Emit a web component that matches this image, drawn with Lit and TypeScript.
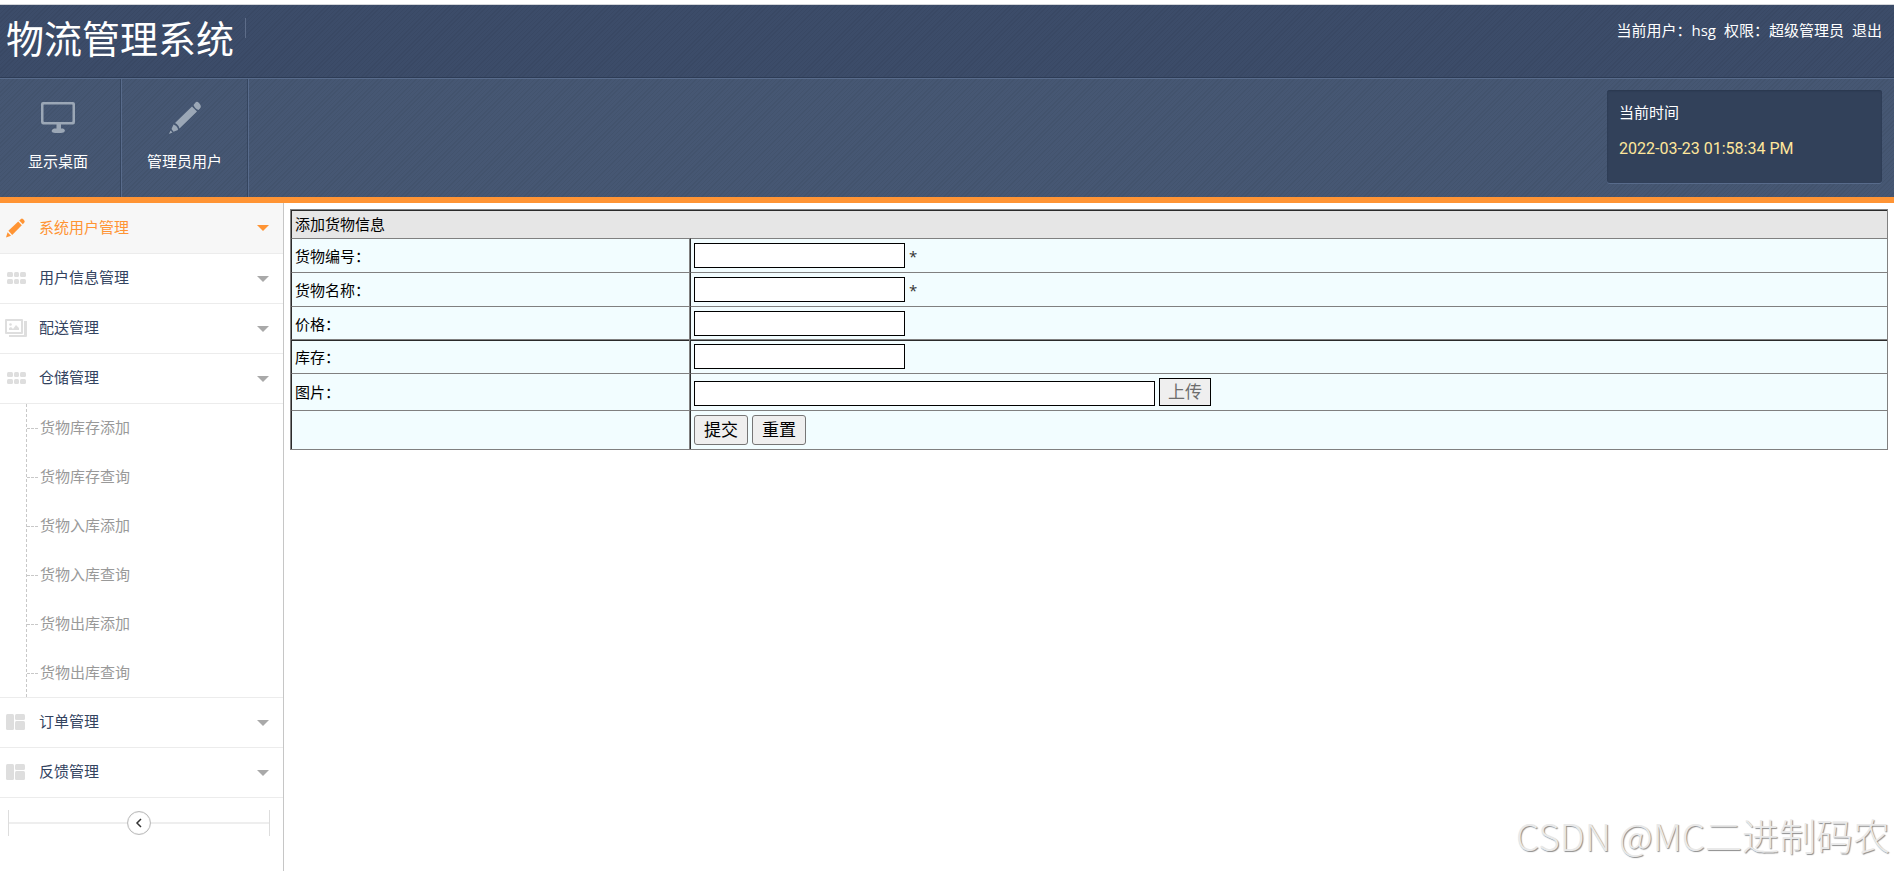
import { LitElement, html, css, svg, nothing } from "lit";
import { customElement } from "lit/decorators.js";
import { classMap } from "lit/directives/class-map.js";

const pencil = svg`
  <path d="M1 19.5 2.6 14.2 6 17.8Z"/>
  <path d="M3.4 12.8 13.2 3.6 16.8 7.2 7.2 17Z"/>
  <path d="M14.2 2.6 16 .9Q17 .2 18 1.1L19.3 2.4Q20.2 3.4 19.3 4.5L17.8 6.2Z"/>`;

const icons: Record<string, unknown> = {
  pencil,
  grid: svg`
    <rect x="2" y="3" width="6" height="5" rx="1.5"/><rect x="9" y="3" width="5" height="5" rx="1.5"/><rect x="15" y="3" width="6" height="5" rx="1.5"/>
    <rect x="2" y="10" width="6" height="5" rx="1.5"/><rect x="9" y="10" width="5" height="5" rx="1.5"/><rect x="15" y="10" width="6" height="5" rx="1.5"/>`,
  gallery: svg`
    <path fill-rule="evenodd" d="M1 0H17Q18 0 18 1V14Q18 15 17 15H1Q0 15 0 14V1Q0 0 1 0ZM2 2V13H16V2Z"/>
    <path d="M4 11V9L6 8 8 10 11 6 14 9V11Z"/><circle cx="5.5" cy="5.5" r="1.3"/>
    <path d="M19 2H22V17Q22 18 21 18H4V16H19Z"/>`,
  layout: svg`
    <rect x="1" y="1" width="8" height="16" rx="1.5"/><rect x="10" y="1" width="10" height="6" rx="1.5"/><rect x="10" y="8" width="10" height="9" rx="1.5"/>`,
};

interface Section {
  label: string;
  icon: string;
  active?: boolean;
  children?: string[];
}

const sections: Section[] = [
  { label: "系统用户管理", icon: "pencil", active: true },
  { label: "用户信息管理", icon: "grid" },
  { label: "配送管理", icon: "gallery" },
  {
    label: "仓储管理",
    icon: "grid",
    children: ["货物库存添加", "货物库存查询", "货物入库添加", "货物入库查询", "货物出库添加", "货物出库查询"],
  },
  { label: "订单管理", icon: "layout" },
  { label: "反馈管理", icon: "layout" },
];

@customElement("page-header")
class PageHeader extends LitElement {
  static styles = css`
    :host { display: block; border-top: 4px solid #fff; border-bottom: 6px solid #ff9434; color: #fff; }
    .brand, .tools {
      background-image: repeating-linear-gradient(135deg, rgb(0 0 0 / 5%) 0 1px, transparent 1px 3px);
    }
    .brand { display: flex; justify-content: space-between; align-items: flex-start; height: 72px; padding: 0 12px 0 6px;
      background-color: #3c4c69; border-top: 1px solid #d4d6da; border-bottom: 1px solid #2d3c56; }
    .title { display: flex; gap: 11px; margin: 0; font-size: 38px; font-weight: 400; line-height: 67px; }
    .title::after { content: ""; width: 1px; height: 20px; margin-top: 13px; background: #5d6c88; }
    .user { display: flex; gap: 8px; font-size: 15px; line-height: 20px; padding-top: 15px; }
    a { color: inherit; text-decoration: none; }
    .tools { display: flex; justify-content: space-between; background-color: #465773; border-top: 1px solid #586b8b; }
    .shortcuts { display: flex; }
    .shortcut { display: flex; flex-direction: column; align-items: center; gap: 14px; height: 118px; box-sizing: border-box;
      padding: 21px 26px 0 25px; font-size: 15px; line-height: 22px; border-right: 1px solid #586b8b; box-shadow: inset -1px 0 #35455f; }
    .shortcut:first-child { padding-left: 28px; padding-right: 33px; }
    .shortcut svg { width: 36px; height: 36px; fill: #9ba7b6; }
    .clock { width: 275px; box-sizing: border-box; height: 93px; margin: 11px 12px 0 0; padding: 11px 12px; border-radius: 3px;
      background: #32415a; box-shadow: inset 0 1px 2px #29374e, 0 1px #586b8b; font-size: 15px; line-height: 22px; }
    .time { display: block; margin-top: 15px; font-family: Roboto, sans-serif; font-size: 16px; color: #ffe79c; }
  `;

  render() {
    return html`
      <div class="brand">
        <h1 class="title">物流管理系统</h1>
        <div class="user"><span>当前用户：hsg</span><span>权限：超级管理员</span><a href="#logout">退出</a></div>
      </div>
      <div class="tools">
        <nav class="shortcuts">
          <a class="shortcut" href="#desktop">
            <svg viewBox="0 0 36 36" aria-hidden="true">
              <path fill-rule="evenodd" d="M3 2H33Q35 2 35 4V22Q35 24.500 33 24.500H21V28.500H23Q25 29 25 31Q24 33 21 33H15Q12 33 11.500 31Q12 29 14 28.500H16.500V24.500H3Q1 24 1 22V4Q1 2 3 2ZM4 4.500Q3.500 4.500 3.500 5V21Q3.500 22 4.500 22H31.500Q32.500 22 32.500 21V5Q32.500 4.500 32 4.500Z"/>
            </svg>
            <span>显示桌面</span>
          </a>
          <a class="shortcut" href="#admins">
            <svg viewBox="0 0 36 36" aria-hidden="true">
              <path d="M2 34 3.500 30.500 5.500 32.500ZM4.500 29 6.500 24.500Q11 26 11 30L6.500 31.800ZM8 23 25 6.500 30 11.500 12.500 28.500Q11.500 24.500 8 23ZM26.500 5 28.500 2.500Q30 1 32 3L33.500 5Q34.500 7 33 8.500L31.500 10Q28 9 26.500 5Z"/>
            </svg>
            <span>管理员用户</span>
          </a>
        </nav>
        <div class="clock">当前时间<time class="time" datetime="2022-03-23T13:58:34">2022-03-23 01:58:34 PM</time></div>
      </div>
    `;
  }
}

@customElement("side-menu")
class SideMenu extends LitElement {
  static styles = css`
    :host { display: block; box-sizing: border-box; width: 284px; border-right: 1px solid #c6c6c6; font-size: 15px; }
    ul { list-style: none; margin: 0; padding: 0; }
    a { text-decoration: none; }
    .row { display: flex; align-items: center; height: 50px; box-sizing: border-box; padding: 0 14px 0 5px;
      line-height: 22px; color: #33435f; border-bottom: 1px solid #ececec; }
    .row.active { height: 51px; background: #f7f7f7; color: #ff9434; }
    .icon { width: 22px; height: 20px; margin-right: 12px; fill: #dedede; }
    .arrow { width: 12px; height: 6px; margin-left: auto; fill: #a9a9a9; }
    .active .icon, .active .arrow { fill: #ff9434; }
    .text { padding-bottom: 3px; }
    .children { margin-left: 26px; border-left: 1px dashed #c8c8c8; }
    .child { display: flex; align-items: center; height: 49px; line-height: 22px; color: #999; }
    .child::before { content: ""; width: 11px; margin-right: 2px; border-top: 1px dashed #c8c8c8; }
    li:last-child > .child { height: 48px; }
    .sub { border-bottom: 1px solid #ececec; }
    .fold { display: flex; align-items: center; height: 26px; margin: 12px 13px 0 8px; border: solid #ddd; border-width: 0 1px; }
    .fold::before, .fold::after { content: ""; flex: 1; height: 2px; background: #eee; }
    .toggle { display: grid; place-items: center; width: 24px; height: 24px; padding: 0; border: 1px solid #bbb; border-radius: 50%;
      background: #fff; box-shadow: inset 0 0 1px #bbb; }
    .toggle svg { width: 8px; height: 10px; fill: none; stroke: #333; stroke-width: 1.5; }
  `;

  render() {
    return html`
      <nav>
        <ul>
          ${sections.map(
            (s) => html`
              <li>
                <a class=${classMap({ row: true, active: !!s.active })} href="#">
                  <svg class="icon" viewBox="0 0 22 20" aria-hidden="true">${icons[s.icon]}</svg>
                  <span class="text">${s.label}</span>
                  <svg class="arrow" viewBox="0 0 12 6" aria-hidden="true"><path d="M0 0H12L6 6Z"/></svg>
                </a>
                ${s.children
                  ? html`<div class="sub"><ul class="children">
                      ${s.children.map((c) => html`<li><a class="child" href="#"><span class="text">${c}</span></a></li>`)}
                    </ul></div>`
                  : nothing}
              </li>
            `
          )}
        </ul>
      </nav>
      <div class="fold">
        <button class="toggle" type="button" aria-label="收起">
          <svg viewBox="0 0 8 10" aria-hidden="true"><path d="M6 1 2 5 6 9"/></svg>
        </button>
      </div>
    `;
  }
}

@customElement("goods-form")
class GoodsForm extends LitElement {
  static styles = css`
    :host { display: block; flex: 1; min-width: 0; padding: 6px 6px 0 6px; }
    form { margin: 0; }
    table { width: 100%; table-layout: fixed; border: 1px solid #808080; border-spacing: 0; font-size: 15px; line-height: 22px; color: #000; }
    .label-col { width: 25%; }
    th, td { padding: 4px 3px; text-align: left; font-weight: 400; background: #f2fdff;
      border-top: 1px solid #808080; border-left: 1px solid #2b2b2b; }
    tbody th { border-right: 1px solid #808080; }
    thead th { padding: 2px 3px 3px; background: #e6e6e6; border-top-color: #2b2b2b; }
    .above-rule > * { padding-bottom: 3px; }
    .below-rule > * { box-shadow: inset 0 1px #2b2b2b; }
    .fields { display: flex; align-items: flex-end; gap: 4px; }
    input { box-sizing: border-box; width: 211px; height: 25px; padding: 1px 2px; border: 1px solid #000; border-radius: 0; background: #fff; font: inherit; }
    .wide { width: 461px; }
    .required { align-self: center; color: #333; }
    button { box-sizing: border-box; height: 30px; padding: 0 9px; border: 1px solid #767676; border-radius: 3px; background: #efefef;
      color: #000; font-family: inherit; font-size: 17px; line-height: 24px; }
    .upload { height: 28px; padding: 0 8px; border-color: #000; border-radius: 0; color: #6d6d6d; }
  `;

  private row(id: string, label: string, required = false, rule = "") {
    return html`
      <tr class=${rule}>
        <th scope="row"><label for=${id}>${label}：</label></th>
        <td>
          <div class="fields">
            <input id=${id} name=${id} type="text" />
            ${required ? html`<span class="required">*</span>` : nothing}
          </div>
        </td>
      </tr>
    `;
  }

  render() {
    return html`
      <form>
        <table>
          <colgroup><col class="label-col" /><col /></colgroup>
          <thead><tr><th colspan="2">添加货物信息</th></tr></thead>
          <tbody>
            ${this.row("code", "货物编号", true)}
            ${this.row("name", "货物名称", true)}
            ${this.row("price", "价格", false, "above-rule")}
            ${this.row("stock", "库存", false, "below-rule")}
            <tr>
              <th scope="row"><label for="picture">图片：</label></th>
              <td>
                <div class="fields">
                  <input class="wide" id="picture" name="picture" type="text" />
                  <button class="upload" type="button">上传</button>
                </div>
              </td>
            </tr>
            <tr>
              <th></th>
              <td><div class="fields"><button type="submit">提交</button><button type="reset">重置</button></div></td>
            </tr>
          </tbody>
        </table>
      </form>
    `;
  }
}

@customElement("app-root")
class AppRoot extends LitElement {
  static styles = css`
    :host { display: flex; flex-direction: column; position: relative; min-height: 100vh; background: #fff;
      font-family: "Open Sans", "Noto Sans CJK SC", sans-serif; }
    .body { display: flex; flex: 1; }
    .credit { position: absolute; right: 4px; bottom: 9px; font-family: "Noto Sans CJK SC", sans-serif;
      font-size: 37px; font-weight: 300; line-height: 54px; color: #e9e9e9; text-shadow: 1px 1px 1px #8c8c8c; pointer-events: none; }
  `;

  render() {
    return html`
      <page-header></page-header>
      <div class="body">
        <side-menu></side-menu>
        <goods-form></goods-form>
      </div>
      <div class="credit">CSDN @MC二进制码农</div>
    `;
  }
}
